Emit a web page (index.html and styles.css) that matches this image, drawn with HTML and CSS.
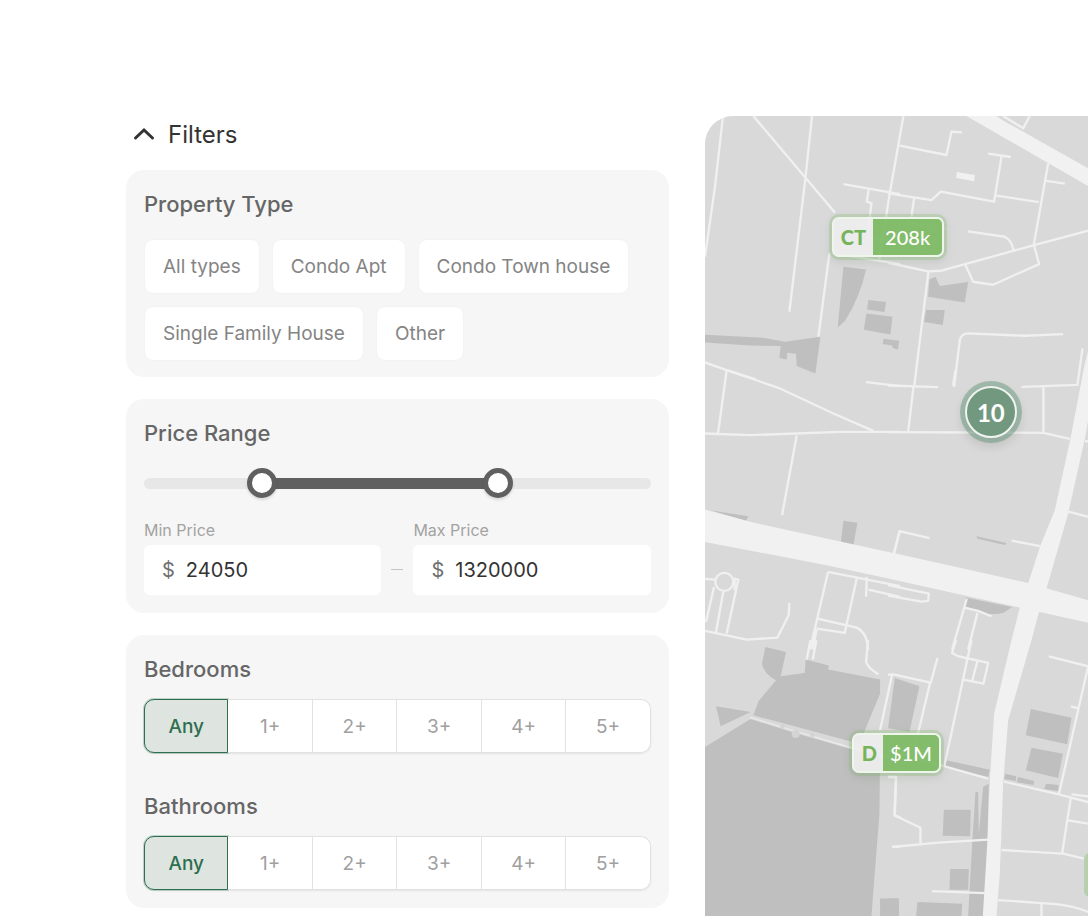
FILE: index.html
```html
<!DOCTYPE html>
<html lang="en">
<head>
<meta charset="utf-8">
<meta name="viewport" content="width=device-width, initial-scale=1">
<title>Property search</title>
<link rel="stylesheet" href="styles.css">
</head>
<body>
<main class="search">
  <form class="filters">
    <button class="filters-toggle" type="button" aria-expanded="true">
      <svg class="chevron" viewBox="0 0 22 14" aria-hidden="true"><path d="M2.500 11 11 3l8.500 8"/></svg>
      Filters
    </button>

    <section class="card card-types" aria-labelledby="type-title">
      <h2 class="card-title" id="type-title">Property Type</h2>
      <div class="chips">
        <button class="chip" type="button">All types</button>
        <button class="chip" type="button">Condo Apt</button>
        <button class="chip" type="button">Condo Town house</button>
        <button class="chip" type="button">Single Family House</button>
        <button class="chip" type="button">Other</button>
      </div>
    </section>

    <section class="card" aria-labelledby="price-title">
      <h2 class="card-title" id="price-title">Price Range</h2>
      <div class="slider">
        <input class="slider-input" type="range" min="0" max="1000" value="217" aria-label="Lowest price">
        <input class="slider-input" type="range" min="0" max="1000" value="712" aria-label="Highest price">
      </div>
      <div class="prices">
        <div class="price">
          <label class="price-label" for="min-price">Min Price</label>
          <div class="price-box"><span class="currency">$</span><input class="price-input" id="min-price" type="text" inputmode="numeric" value="24050"></div>
        </div>
        <span class="dash"></span>
        <div class="price">
          <label class="price-label" for="max-price">Max Price</label>
          <div class="price-box"><span class="currency">$</span><input class="price-input" id="max-price" type="text" inputmode="numeric" value="1320000"></div>
        </div>
      </div>
    </section>

    <section class="card card-rooms">
      <fieldset class="rooms">
        <legend class="card-title">Bedrooms</legend>
        <div class="segments">
          <label class="segment"><input class="segment-input" type="radio" name="bedrooms" checked>Any</label>
          <label class="segment"><input class="segment-input" type="radio" name="bedrooms">1+</label>
          <label class="segment"><input class="segment-input" type="radio" name="bedrooms">2+</label>
          <label class="segment"><input class="segment-input" type="radio" name="bedrooms">3+</label>
          <label class="segment"><input class="segment-input" type="radio" name="bedrooms">4+</label>
          <label class="segment"><input class="segment-input" type="radio" name="bedrooms">5+</label>
        </div>
      </fieldset>
      <fieldset class="rooms">
        <legend class="card-title">Bathrooms</legend>
        <div class="segments">
          <label class="segment"><input class="segment-input" type="radio" name="bathrooms" checked>Any</label>
          <label class="segment"><input class="segment-input" type="radio" name="bathrooms">1+</label>
          <label class="segment"><input class="segment-input" type="radio" name="bathrooms">2+</label>
          <label class="segment"><input class="segment-input" type="radio" name="bathrooms">3+</label>
          <label class="segment"><input class="segment-input" type="radio" name="bathrooms">4+</label>
          <label class="segment"><input class="segment-input" type="radio" name="bathrooms">5+</label>
        </div>
      </fieldset>
    </section>
  </form>

  <section class="map" aria-label="Map of listings">
    <svg class="map-art" viewBox="15 18 1149 2400" preserveAspectRatio="xMinYMin slice" aria-hidden="true">
      <g class="block">
        <path d="M430 470 498 478Q480 560 435 632L413 652ZM505 570 558 576 553 606 501 598ZM499 610 577 620 571 673 491 659ZM550 686 597 692 594 718 577 714 577 706 548 702ZM15 674 190 683 255 695 361 680 346 790 290 768 288 732 262 728 260 748 238 744 242 708 150 706 15 697Z"/>
        <path transform="translate(564 0)" d="M124 508 142 500 155 528 240 516 230 577 120 560ZM114 600 170 600 164 645 108 636Z"/>
        <path transform="translate(0 780)" d="M30 420 145 438 138 452ZM430 452 472 458 460 524 422 520Z"/>
        <path transform="translate(564 780)" d="M232 682 372 710 345 728Q310 735 285 728L232 708ZM265 498 355 518 350 524 268 506Z"/>
        <path transform="translate(0 1590)" d="M196 20 258 35 242 108 314 98 317 58 386 76 384 88 540 118 540 160 478 310 160 225 176 182 228 120Q190 100 186 70ZM48 198 152 215 62 258ZM15 320 155 234 450 324 540 340 538 520 514 828 15 828ZM540 774 596 774 596 828 540 828Z"/>
        <path transform="translate(564 1590)" d="M20 113 94 138 64 275 0 264ZM428 206 550 232 537 312 413 285ZM430 322 524 340 510 413 413 390ZM175 360 305 388 300 410 170 382ZM352 400 384 408 384 422 348 416ZM390 410 438 422 436 434 386 426ZM474 430 512 434 510 452 468 446ZM167 508 248 508 246 588 164 586ZM186 686 242 686 240 748 184 748ZM88 785 222 790 220 828 84 828ZM0 774 32 774 32 828 0 828ZM262 455 270 455 272 580 285 440 302 430 298 596 292 828 240 828 252 615Z"/>
      </g>
      <g class="street">
        <path d="M69 18 45 230 15 440M160 18 405 308M336 18 316 205 268 605M388 430 355 680M430 222 600 252M506 238 500 274 514 280 502 382 600 395M400 430 600 462M15 757 80 780 168 808"/>
        <g transform="translate(564 0)">
          <path d="M46 18 5 250-27 450M35 107 175 135 190 65 222 67M0 250 130 270 158 245 318 275 340 140M300 131 368 141M325 257 452 276M480 160 437 404 453 462 315 524 255 515 232 465M470 212 530 221M78 265 70 320M0 458 120 484 160 482 438 405 600 362M240 364 350 380Q370 390 376 420M121 484 78 830M345 18 405 55 425 18M198 830 215 690Q218 672 240 670L410 677 525 672M583 715 568 823"/>
          <path d="M50 335 180 357M35 400 155 422" opacity=".25"/>
        </g>
        <g transform="translate(0 780)">
          <path d="M80 0 54 190M80 0 235 53 400 130 520 182M15 190 150 195 420 185 600 185M290 196 246 435M498 36 600 48M600 480 580 553M15 626 45 628M42 650 18 755M70 664 48 785M102 625 115 628 80 790M104 622 104 660M15 782 140 808 232 802 266 735 268 698M384 605 330 838M384 605 600 648M470 624 434 788 350 775M500 620 498 680M505 658 600 680M355 746 470 772Q502 788 504 838M350 778 338 838"/>
          <circle cx="73" cy="635" r="27"/>
        </g>
        <g transform="translate(564 780)">
          <path d="M0 46 150 51M400 50 570 44M76 50 60 186M202 0 195 46M0 186 466 188 545 206M466 48 466 188M124 504 34 483 18 550M370 511 455 528M540 424 600 440M0 645 122 670 120 692 100 694 0 676M236 685 192 838M228 712 270 722 310 738M268 728 240 838M590 212 600 214"/>
        </g>
        <g transform="translate(0 1590)">
          <path d="M331 0 320 58M349 0 338 58M504 0 498 65Q505 85 535 102M540 270 576 103M565 408 588 408 583 525 600 532M576 620 600 618"/>
          <path d="M150 232 285 274 450 322 600 357" stroke-opacity=".65"/>
          <circle class="grove" cx="287" cy="281" r="12"/>
          <circle class="grove" cx="247" cy="258" r="7"/>
          <circle class="grove" cx="337" cy="284" r="7"/>
        </g>
        <g transform="translate(564 1590)">
          <path d="M0 104 15 102 128 127 148 53M126 127 80 320M204 0 192 38 210 48 300 68 286 130 225 118M250 0 168 380M268 62 252 122M0 330 140 370 300 415M348 424 512 462 600 485M0 410 24 412 20 525 97 562 97 608M12 620 150 607 300 598M340 629 525 640 600 658M132 752 290 758M330 779 460 788Q550 792 600 815M460 788 460 828M482 48 600 78 512 462M548 198 570 204M550 462 600 468M548 472 522 638M540 540 600 550"/>
        </g>
      </g>
      <g class="avenue">
        <path transform="translate(564 0)" d="M235 18H325L345 32 400 62 600 175V228Z"/>
        <path d="M15 1198 150 1235 600 1333 984 1418 1164 1470V1538L959 1492 564 1405 380 1365 15 1295Z"/>
        <path d="M1152 770 1112 980 1064 1200 1019 1310 984 1420 959 1492 934 1590 882 1810 869 2010 862 2190 848 2418H889L899 2290 909 2020 924 1830 994 1590 1014 1515 1039 1435 1104 1210 1154 985 1164 930V720Z"/>
        <path transform="translate(564 0)" d="M206 186 260 195 258 214 204 204Z"/>
      </g>
    </svg>
    <button class="pin pin-ct" type="button"><span class="pin-kind">CT</span><span class="pin-price">208k</span></button>
    <button class="cluster" type="button">10</button>
    <button class="pin pin-d" type="button"><span class="pin-kind">D</span><span class="pin-price">$1M</span></button>
    <span class="pin-edge"></span>
  </section>
</main>
</body>
</html>
```
FILE: styles.css
```css
* { box-sizing: border-box; }

body {
  margin: 0;
  background: #fff;
  color: #333;
  font-family: Inter, "Open Sans", sans-serif;
  font-size: 19px;
}

button, input { font: inherit; color: inherit; }
button { border: 0; cursor: pointer; }

.search {
  display: grid;
  grid-template-columns: minmax(0, 17fr) minmax(0, 12fr);
  gap: 36px;
  min-height: 100vh;
  padding: 116px 0 0 126px;
}

.filters {
  display: flex;
  flex-direction: column;
  gap: 22px;
  padding: 2px 0 8px;
}

.filters-toggle {
  display: flex;
  align-items: center;
  align-self: flex-start;
  gap: 13px;
  height: 32px;
  margin-bottom: -2px;
  padding: 0 7px;
  background: none;
  font-size: 24px;
}

.chevron {
  width: 22px;
  height: 14px;
  fill: none;
  stroke: #333;
  stroke-width: 3;
  stroke-linecap: round;
}

.card {
  padding: 18px;
  border-radius: 18px;
  background: #f6f6f6;
}

.card-types { padding-bottom: 16px; }

.card-title {
  margin: 0 0 19px;
  padding: 0;
  color: #666;
  font-size: 22px;
  font-weight: 500;
  line-height: 32px;
}

.chips {
  display: flex;
  flex-wrap: wrap;
  gap: 12px;
}

.chip {
  height: 55px;
  padding: 0 18px;
  border: 1px solid #f3f3f3;
  border-radius: 9px;
  background: #fff;
  color: #848484;
}

.slider {
  position: relative;
  height: 30px;
}

.slider::before {
  content: "";
  position: absolute;
  inset: 10px 0 9px;
  border-radius: 6px;
  background: linear-gradient(to right, #e7e7e7 24%, #606060 24% 70%, #e7e7e7 70%);
}

.slider-input {
  position: absolute;
  inset: 0;
  width: 100%;
  height: 30px;
  margin: 0;
  appearance: none;
  background: none;
  pointer-events: none;
}

.slider-input::-webkit-slider-thumb {
  appearance: none;
  width: 30px;
  height: 30px;
  border: 5px solid #606060;
  border-radius: 50%;
  background: #fff;
  box-shadow: 0 2px 3px rgb(0 0 0 / 12%);
  pointer-events: auto;
}

.prices {
  display: grid;
  grid-template-columns: minmax(0, 1fr) 12px minmax(0, 1fr);
  gap: 10px;
  align-items: end;
  margin-top: 22px;
}

.price-label {
  display: block;
  margin-bottom: 5px;
  color: #a3a3a3;
  font-size: 16px;
  line-height: 20px;
}

.price-box {
  display: flex;
  align-items: center;
  gap: 11px;
  height: 50px;
  padding: 0 18px;
  border-radius: 6px;
  background: #fff;
  font-size: 20px;
}

.currency { color: #707070; }

.price-input {
  flex: 1;
  min-width: 0;
  padding: 0;
  border: 0;
  outline: 0;
  background: none;
}

.dash {
  height: 1px;
  margin-bottom: 25px;
  background: #c4c4c4;
}

.card-rooms {
  display: grid;
  gap: 37px;
}

.rooms {
  min-width: 0;
  margin: 0;
  padding: 0;
  border: 0;
}

.rooms .card-title { margin-bottom: 14px; }

.segments {
  display: grid;
  grid-template-columns: repeat(6, minmax(0, 1fr));
  height: 54px;
  border-radius: 10px;
  box-shadow: 0 1px 2px rgb(0 0 0 / 8%);
}

.segment {
  display: grid;
  place-items: center;
  border: 1px solid #e2e2e2;
  border-left-width: 0;
  background: #fff;
  color: #a0a0a0;
}

.segment:first-child { border-left-width: 1px; border-radius: 10px 0 0 10px; }
.segment:last-child { border-radius: 0 10px 10px 0; }

.segment:has(:checked) {
  border: 1px solid #2d6e4e;
  background: #dee4e0;
  box-shadow: 0 0 0 1px rgb(45 110 78 / 25%);
  color: #2d6e4e;
  font-weight: 500;
}

.segment-input {
  position: absolute;
  opacity: 0;
}

.map {
  position: relative;
  overflow: hidden;
  border-radius: 28px 0 0 0;
  background: #d9d9d9;
}

.map-art {
  position: absolute;
  inset: 0;
  width: 100%;
  height: 100%;
}

.block { fill: #bfbfbf; }
.street { fill: none; stroke: #f0f0f0; stroke-width: 7; stroke-linejoin: round; }
.avenue { fill: #f1f1f1; }
.grove { fill: #d4d4d4; stroke: none; }

.pin {
  position: absolute;
  display: flex;
  height: 40px;
  padding: 0;
  border: 2px solid #eef5ea;
  border-radius: 7px;
  background: none;
  box-shadow: 0 0 0 3px rgb(129 187 105 / 28%), 0 3px 8px 2px rgb(60 90 60 / 12%);
  font-family: Lato, sans-serif;
  font-size: 20px;
  line-height: 36px;
}

.pin-ct { left: 127px; top: 101px; }
.pin-d { left: 147px; top: 617px; }

.pin-kind {
  padding: 0 8px;
  background: rgb(238 238 238 / 92%);
  color: #76b45b;
  font-weight: 900;
}

.pin-price {
  padding: 0 12px;
  border-radius: 0 5px 5px 0;
  background: rgb(126 186 101 / 95%);
  color: #fff;
  font-weight: 500;
}

.pin-ct .pin-kind { padding: 0 7px; }
.pin-d .pin-kind { padding: 0 6px 0 8px; }
.pin-d .pin-price { padding: 0 7px; }

.cluster {
  position: absolute;
  left: 260px;
  top: 270px;
  width: 52px;
  height: 52px;
  padding: 0;
  border: 2px solid #eff4f1;
  border-radius: 50%;
  background: #72997f;
  box-shadow: 0 0 0 5px rgb(84 142 108 / 42%), 0 5px 10px 4px rgb(0 0 0 / 10%);
  color: #fff;
  font-family: Lato, sans-serif;
  font-size: 24px;
  font-weight: 700;
}

.pin-edge {
  position: absolute;
  left: 379px;
  top: 737px;
  width: 12px;
  height: 44px;
  border-radius: 8px;
  background: #b7cfad;
}
```
